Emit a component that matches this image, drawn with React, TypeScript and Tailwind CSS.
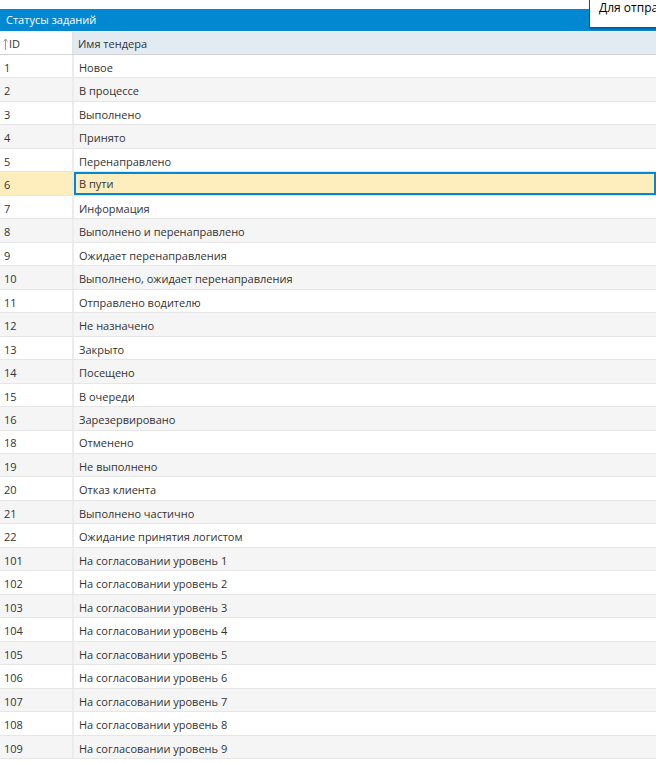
const rows: [number, string][] = [
  [1, 'Новое'],
  [2, 'В процессе'],
  [3, 'Выполнено'],
  [4, 'Принято'],
  [5, 'Перенаправлено'],
  [6, 'В пути'],
  [7, 'Информация'],
  [8, 'Выполнено и перенаправлено'],
  [9, 'Ожидает перенаправления'],
  [10, 'Выполнено, ожидает перенаправления'],
  [11, 'Отправлено водителю'],
  [12, 'Не назначено'],
  [13, 'Закрыто'],
  [14, 'Посещено'],
  [15, 'В очереди'],
  [16, 'Зарезервировано'],
  [18, 'Отменено'],
  [19, 'Не выполнено'],
  [20, 'Отказ клиента'],
  [21, 'Выполнено частично'],
  [22, 'Ожидание принятия логистом'],
  [101, 'На согласовании уровень 1'],
  [102, 'На согласовании уровень 2'],
  [103, 'На согласовании уровень 3'],
  [104, 'На согласовании уровень 4'],
  [105, 'На согласовании уровень 5'],
  [106, 'На согласовании уровень 6'],
  [107, 'На согласовании уровень 7'],
  [108, 'На согласовании уровень 8'],
  [109, 'На согласовании уровень 9'],
]

const SELECTED = 6

export default function App() {
  return (
    <div
      className="relative h-[763px] w-[656px] overflow-hidden bg-white text-[11px] text-[#333]"
      style={{ fontFamily: '"Open Sans", "Noto Sans", sans-serif' }}
    >
      <div className="h-[9px]" />
      {/* Title bar */}
      <div className="flex h-[22px] items-center bg-[#0288d1] pl-[6px] pt-px text-white">
        Статусы заданий
      </div>

      {/* Header */}
      <div className="mt-px flex h-[23px] border-b border-[#d4d4d4]">
        <div className="flex w-[74px] shrink-0 items-center border-r-2 border-[#e4e4e4] bg-white pl-[3px] pt-[2px]">
          <svg width="5" height="12" viewBox="0 0 5 12" className="mr-px">
            <path d="M2.5 1v11M0.5 3.5L2.5 1l2 2.5" fill="none" stroke="#999" strokeWidth="1" />
          </svg>
          ID
        </div>
        <div className="flex flex-1 items-center bg-[#e1ebf1] pl-[4px] pt-[2px]">Имя тендера</div>
      </div>

      {/* Rows */}
      <div>
        {rows.map(([id, name], i) => {
          const selected = id === SELECTED
          const bg = selected ? 'bg-[#feedbd]' : i % 2 === 0 ? 'bg-white' : 'bg-[#f5f5f5]'
          return (
            <div key={id} className={`box-border flex h-[23.47px] border-b border-[#e6e6e6] ${bg}`}>
              <div className="flex w-[74px] shrink-0 items-center border-r-2 border-[#ececec] pl-[4px] pt-[4px]">
                {id}
              </div>
              {selected ? (
                <div className="flex flex-1 items-center border-2 border-[#0288d1] pl-[3px] pt-[2px]">{name}</div>
              ) : (
                <div className="flex flex-1 items-center pl-[5px] pt-[4px]">{name}</div>
              )}
            </div>
          )
        })}
      </div>

      {/* Tooltip */}
      <div className="absolute left-[589px] top-[-2px] h-[30px] w-[90px] whitespace-nowrap border border-[#444] bg-white pl-[9px] text-[12px] leading-[18px] text-black shadow-[1px_1px_2px_rgba(0,0,0,0.3)]">
        Для отправки
      </div>
    </div>
  )
}
